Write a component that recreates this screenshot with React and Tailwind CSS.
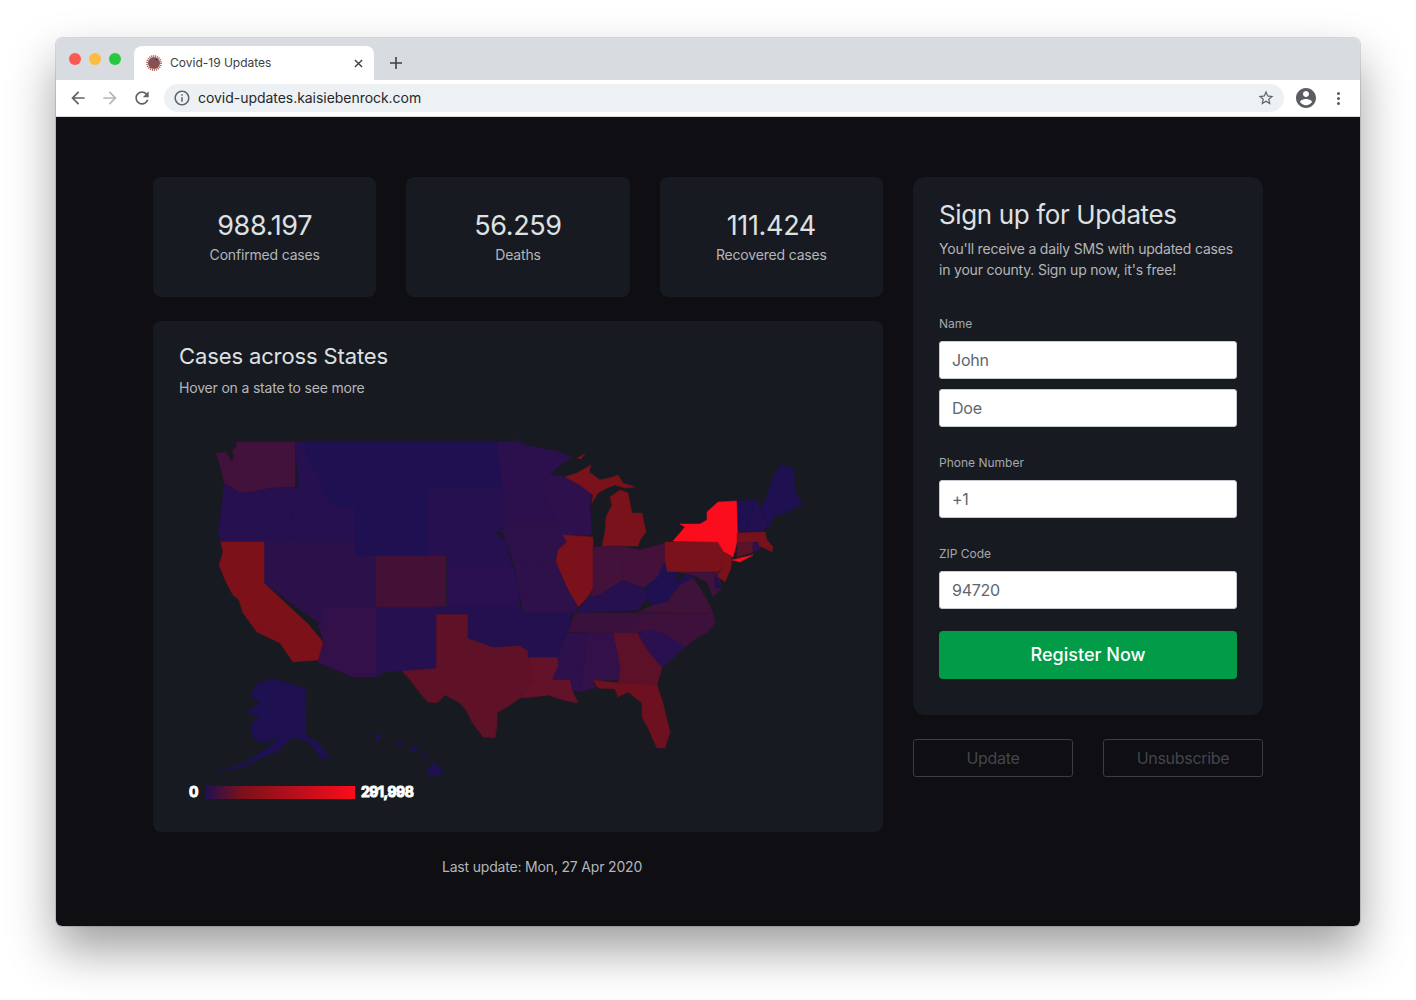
import React from 'react';

const states = [
  ['#42113c', 'M236 442L295 442L295 487L273 488L253 492L240 493L233 488L224 483L222 472L216 453L226 452L229 457L232 462L234 455L232 450L237 447Z'],
  ['#271050', 'M224 484L233 488L240 493L253 492L273 488L295 487L299 490L293 507L294 542L221 542L218 530L222 508Z'],
  ['#271050', 'M295 442L304 442L307 458L321 478L322 493L337 508L355 505L355 542L294 542L293 507L299 490Z'],
  ['#1f1052', 'M304 442L427 442L427 502L355 502L355 505L337 508L322 493L321 478L307 458Z'],
  ['#1f1052', 'M355 502L427 502L427 556L355 556Z'],
  ['#1f1052', 'M427 442L497 442L502 488L427 488Z'],
  ['#271050', 'M427 488L502 488L503 532L483 530L427 529Z'],
  ['#271050', 'M427 529L483 530L495 532L505 540L513 568L447 568L447 556L427 556Z'],
  ['#2b104d', 'M497 442L517 442L517 437L520 443L530 446L540 448L556 451L572 457L560 465L550 475L545 478L542 495L557 522L503 522L502 488Z'],
  ['#2e114a', 'M503 522L557 522L563 535L567 542L558 550L555 560L513 562L503 532Z'],
  ['#2d104c', 'M545 478L550 475L565 477L580 485L592 493L590 505L592 535L563 535L557 522L542 495Z'],
  ['#7b111a', 'M577 458L585 454L581 459Z'],
  ['#79121a', 'M565 477L577 473L591 465L589 472L600 480L613 477L618 475L623 483L635 487L625 488L615 485L607 488L598 493L592 503L593 495L580 485Z'],
  ['#79121a', 'M620 490L628 493L632 513L642 513L646 532L640 540L638 546L602 546L605 532L606 517L612 505L610 497Z'],
  ['#7b111a', 'M563 535L593 537L593 588L587 598L578 607L567 588L555 568L558 550L567 542Z'],
  ['#43113a', 'M593 547L621 546L623 580L600 595L590 597L593 588Z'],
  ['#43113a', 'M621 546L640 550L665 543L665 562L657 578L643 588L623 580Z'],
  ['#79121a', 'M665 542L718 542L724 552L720 562L724 568L717 572L665 572Z'],
  ['#fb0d1d', 'M673 541L680 533L685 527L680 524L700 524L707 520L707 512L718 502L737 501L738 532L737 542L733 557L724 552L718 542Z'],
  ['#fb0d1d', 'M732 560L753 555L740 562Z'],
  ['#7b111a', 'M724 552L732 557L731 568L725 582L716 575L724 568L720 562Z'],
  ['#1f1052', 'M737 501L756 500L747 532L738 532Z'],
  ['#231050', 'M756 500L762 512L770 525L762 532L747 532Z'],
  ['#1f1052', 'M762 505L767 497L772 480L780 465L793 468L795 492L803 503L787 512L773 517L769 528L762 512Z'],
  ['#75121e', 'M737 533L765 532L767 540L773 547L772 552L762 547L737 542Z'],
  ['#5a1228', 'M737 542L753 542L753 552L737 557Z'],
  ['#2e114a', 'M753 542L758 542L760 550L753 552Z'],
  ['#1f1052', 'M665 562L667 572L677 572L675 583L690 573L693 578L680 585L667 602L653 605L644 595L648 585L657 578Z'],
  ['#271050', 'M623 580L643 588L647 598L638 610L577 613L587 598L600 595Z'],
  ['#3f1239', 'M638 612L653 605L667 602L680 585L693 578L700 588L708 602L713 613Z'],
  ['#3f1239', 'M677 572L717 572L722 588L713 597L707 582L693 575Z'],
  ['#1f1052', 'M715 575L722 588L715 588Z'],
  ['#3d113b', 'M627 633L660 632L685 647L698 637L707 633L715 623L713 613L640 613Z'],
  ['#3a113d', 'M568 632L575 613L653 613L627 633Z'],
  ['#2a104f', 'M637 633L650 630L663 633L685 647L662 668L647 650Z'],
  ['#5c1128', 'M613 633L637 633L647 650L662 668L657 685L618 683L620 668Z'],
  ['#33104a', 'M587 633L613 633L620 668L618 680L593 680L595 688L580 692L585 657Z'],
  ['#2d104c', 'M563 633L587 633L585 657L580 692L572 690L570 680L552 680L558 665L557 650Z'],
  ['#6d1020', 'M593 680L618 683L657 685L663 703L670 732L665 748L657 748L648 728L642 717L642 703L628 692L618 697L615 689L598 688Z'],
  ['#63122a', 'M528 657L557 657L558 665L552 680L570 680L572 690L578 703L563 700L548 695L533 697L520 698L532 680Z'],
  ['#5f1127', 'M436 614L468 614L468 638L493 647L520 645L528 650L532 680L520 698L510 705L497 713L497 725L495 738L483 737L472 722L466 710L460 703L445 695L437 703L428 702L420 693L410 680L400 669L436 668Z'],
  ['#271050', 'M376 607L436 607L436 668L385 672L376 677Z'],
  ['#33104a', 'M324 607L376 607L376 677L353 677L317 662L324 642L318 625L324 617Z'],
  ['#2c1049', 'M264 542L324 542L324 625L317 622L264 583Z'],
  ['#2c1049', 'M324 542L355 542L355 556L376 556L376 607L324 607Z'],
  ['#421135', 'M376 556L446 556L446 607L376 607Z'],
  ['#7c111a', 'M221 542L264 542L264 583L309 625L323 642L318 660L293 662L280 643L257 632L243 613L239 600L233 595L226 582L219 565L223 552Z'],
  ['#2a1050', 'M447 568L513 568L518 582L520 607L436 607L446 607L447 607Z'],
  ['#25104f', 'M436 607L520 607L523 613L523 648L520 645L493 647L468 638L468 614L436 614Z'],
  ['#2e114a', 'M513 562L555 560L567 588L578 607L575 613L523 613L518 582Z'],
  ['#24104f', 'M523 613L572 613L568 632L557 657L528 657L528 650L523 648Z'],
  ['#1f1052', 'M272 679L305 688L306 735L317 742L329 757L322 759L310 743L292 737L277 752L263 757L243 767L220 771L247 762L268 747L280 737L262 743L252 737L252 723L260 717L247 712L260 703L250 695L258 683Z'],
  ['#1f1052', 'M427 770L435 762L443 773L432 781Z'],
];

const Mat = ({ d, className }) => (
  <svg viewBox="0 0 24 24" className={className} fill="currentColor"><path d={d} /></svg>
);

const Stat = ({ value, label }) => (
  <div className="flex-1 h-[120px] rounded-lg bg-[#171a21] flex flex-col items-center pt-[30px]">
    <div className="text-[27px] leading-[38px] tracking-[-0.35px] text-[#dfe0e2]">{value}</div>
    <div className="text-sm leading-5 tracking-[-0.18px] text-[#b4b6b9]">{label}</div>
  </div>
);

const Field = ({ value }) => (
  <div className="h-[38px] rounded-[3px] bg-white border border-[#c5cad1] px-3 flex items-center text-base tracking-[-0.25px] text-[#5c6670]">{value}</div>
);

export default function App() {
  return (
    <div className="w-[1416px] h-[1000px] bg-white overflow-hidden pt-[38px] pl-[56px] font-['Inter',sans-serif]">
      <div className="w-[1304px] h-[888px] rounded-md overflow-hidden shadow-[0_0_0_1px_rgba(0,0,0,0.12),0_24px_48px_rgba(0,0,0,0.38)] flex flex-col">
        {/* tab strip */}
        <div className="h-[42px] bg-[#d8dce0] flex items-end">
          <div className="flex items-center gap-2 pl-[13px] h-full w-[78px]">
            <span className="w-3 h-3 rounded-full bg-[#fc5753]"></span>
            <span className="w-3 h-3 rounded-full bg-[#fdbc40]"></span>
            <span className="w-3 h-3 rounded-full bg-[#27c840]"></span>
          </div>
          <div className="w-[240px] h-[34px] bg-white rounded-t-lg flex items-center pl-[12px] pr-[11px]">
            <svg viewBox="0 0 16 16" className="w-4 h-4 shrink-0">
              <circle cx="8" cy="8" r="6" fill="#7a5557" />
              <circle cx="8" cy="8" r="7" fill="none" stroke="#b5433c" strokeWidth="1.8" strokeDasharray="1 1" />
              <circle cx="6" cy="6" r="1.2" fill="#a8443f" />
              <circle cx="10" cy="9" r="1.4" fill="#a8443f" />
              <circle cx="6.5" cy="11" r="1" fill="#a8443f" />
              <circle cx="10.5" cy="4.5" r="0.9" fill="#4c3c40" />
            </svg>
            <span className="ml-2 text-xs text-[#3c4043] flex-1">Covid-19 Updates</span>
            <svg viewBox="0 0 10 10" className="w-[9px] h-[9px]" stroke="#3c4043" strokeWidth="1.5"><path d="M1 1L9 9M9 1L1 9" /></svg>
          </div>
          <svg viewBox="0 0 12 12" className="w-3 h-3 ml-4 mb-[11px]" stroke="#3c4043" strokeWidth="1.6"><path d="M6 0V12M0 6H12" /></svg>
        </div>

        {/* toolbar */}
        <div className="h-[37px] bg-white border-b border-[#d6d8da] flex items-center pl-3 pr-3">
          <Mat className="w-5 h-5 text-[#5f6368]" d="M20 11H7.83l5.59-5.59L12 4l-8 8 8 8 1.41-1.41L7.83 13H20v-2z" />
          <Mat className="w-5 h-5 ml-3 text-[#b5b7ba]" d="M4 11h12.17l-5.59-5.59L12 4l8 8-8 8-1.41-1.41L16.17 13H4v-2z" />
          <Mat className="w-5 h-5 ml-3 text-[#5f6368]" d="M17.65 6.35C16.2 4.9 14.21 4 12 4c-4.42 0-7.99 3.58-7.99 8s3.57 8 7.99 8c3.73 0 6.84-2.55 7.73-6h-2.08c-.82 2.33-3.04 4-5.65 4-3.31 0-6-2.69-6-6s2.69-6 6-6c1.66 0 3.14.69 4.22 1.78L13 11h7V4l-2.35 2.35z" />
          <div className="ml-3 w-[1120px] h-7 rounded-full bg-[#eef1f3] flex items-center pl-[9px] pr-[9px]">
            <Mat className="w-[18px] h-[18px] text-[#5f6368]" d="M11 7h2v2h-2zm0 4h2v6h-2zm1-9C6.48 2 2 6.48 2 12s4.48 10 10 10 10-4.48 10-10S17.52 2 12 2zm0 18c-4.41 0-8-3.59-8-8s3.59-8 8-8 8 3.59 8 8-3.59 8-8 8z" />
            <span className="ml-[7px] text-sm tracking-[-0.04px] text-[#26282b] flex-1">covid-updates.kaisiebenrock.com</span>
            <Mat className="w-[18px] h-[18px] text-[#5f6368]" d="M22 9.24l-7.19-.62L12 2 9.19 8.63 2 9.24l5.46 4.73L5.82 21 12 17.27 18.18 21l-1.63-7.03L22 9.24zM12 15.4l-3.76 2.27 1-4.28-3.32-2.88 4.38-.38L12 6.1l1.71 4.04 4.38.38-3.32 2.88 1 4.28L12 15.4z" />
          </div>
          <Mat className="w-6 h-6 ml-[10px] text-[#5a5e63]" d="M12 2C6.48 2 2 6.48 2 12s4.48 10 10 10 10-4.48 10-10S17.52 2 12 2zm0 3c1.66 0 3 1.34 3 3s-1.34 3-3 3-3-1.34-3-3 1.34-3 3-3zm0 14.2c-2.5 0-4.71-1.28-6-3.22.03-1.99 4-3.08 6-3.08 1.99 0 5.97 1.09 6 3.08-1.29 1.94-3.5 3.22-6 3.22z" />
          <div className="ml-[19px] flex flex-col gap-[2px]">
            <span className="w-[3px] h-[3px] rounded-full bg-[#5a5e63]"></span>
            <span className="w-[3px] h-[3px] rounded-full bg-[#5a5e63]"></span>
            <span className="w-[3px] h-[3px] rounded-full bg-[#5a5e63]"></span>
          </div>
        </div>

        {/* page */}
        <div className="flex-1 bg-[#0e0e13] pt-[60px] pl-[97px] flex gap-[30px]">
          <div className="w-[730px]">
            <div className="flex gap-[30px]">
              <Stat value="988.197" label="Confirmed cases" />
              <Stat value="56.259" label="Deaths" />
              <Stat value="111.424" label="Recovered cases" />
            </div>
            <div className="mt-6 h-[511px] rounded-lg bg-[#171a21] px-[26px] pt-[19px]">
              <h2 className="text-[22px] leading-8 tracking-[-0.12px] text-[#dfe0e2]">Cases across States</h2>
              <p className="text-sm leading-5 mt-[6px] tracking-[-0.18px] text-[#b4b6b9]">Hover on a state to see more</p>
              <svg viewBox="179 430 678 345" className="block w-[678px] h-[345px] mt-[32px]">
                {states.map(([fill, d], i) => (
                  <path key={i} d={d} fill={fill} stroke={fill} strokeWidth="0.5" strokeLinejoin="round" />
                ))}
                <circle cx="378" cy="737" r="3" fill="#1f1052" />
                <circle cx="400" cy="744" r="2.5" fill="#1f1052" />
                <ellipse cx="414" cy="750" rx="4" ry="2" fill="#1f1052" />
                <ellipse cx="424" cy="755" rx="3" ry="1.5" fill="#1f1052" />
              </svg>
              <div className="flex items-center mt-[10px] pl-[10px] text-sm font-bold leading-none text-white [-webkit-text-stroke:1px_white]">
                <span className="w-[16px]">0</span>
                <div className="w-[150px] h-[13px] bg-[linear-gradient(to_right,#1f1052,#7c111a_25%,#fb0d1d)]"></div>
                <span className="ml-[6px] tracking-[-0.5px]">291,998</span>
              </div>
            </div>
            <p className="mt-[25px] pl-12 text-center text-sm leading-5 tracking-[-0.18px] text-[#b4b6b9]">Last update: Mon, 27 Apr 2020</p>
          </div>

          <div className="w-[350px]">
            <div className="h-[538px] rounded-xl bg-[#171a21] px-[26px] pt-[18px]">
              <h2 className="text-[26px] leading-10 tracking-[-0.37px] text-[#dfe0e2]">Sign up for Updates</h2>
              <p className="text-sm leading-[21px] mt-[3px] tracking-[-0.2px] text-[#b4b6b9]">You'll receive a daily SMS with updated cases in your county. Sign up now, it's free!</p>
              <label className="block text-xs leading-4 mt-[36px] text-[#a5a8ac]">Name</label>
              <div className="mt-[9px] flex flex-col gap-[10px]">
                <Field value="John" />
                <Field value="Doe" />
              </div>
              <label className="block text-xs leading-4 mt-[28px] text-[#a5a8ac]">Phone Number</label>
              <div className="mt-[9px]"><Field value="+1" /></div>
              <label className="block text-xs leading-4 mt-[28px] text-[#a5a8ac]">ZIP Code</label>
              <div className="mt-[9px]"><Field value="94720" /></div>
              <button className="mt-[22px] w-full h-12 rounded bg-[#029c49] text-white text-lg font-medium">Register Now</button>
            </div>
            <div className="mt-6 flex justify-between">
              <button className="w-40 h-[38px] rounded-[3px] border border-[#3a3d42] text-base tracking-[-0.3px] text-[#43464b]">Update</button>
              <button className="w-40 h-[38px] rounded-[3px] border border-[#3a3d42] text-base tracking-[-0.3px] text-[#43464b]">Unsubscribe</button>
            </div>
          </div>
        </div>
      </div>
    </div>
  );
}
